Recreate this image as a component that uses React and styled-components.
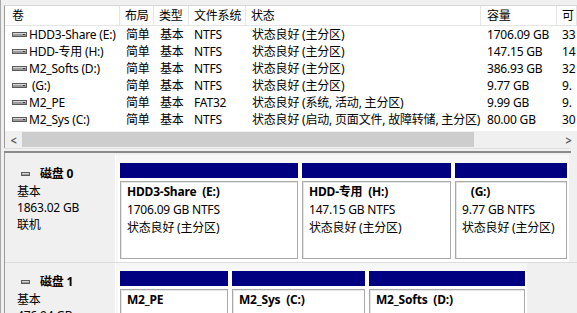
import React from 'react';
import styled, { createGlobalStyle } from 'styled-components';

const GlobalStyle = createGlobalStyle`
  html, body {
    margin: 0;
    padding: 0;
    background: #f0f0f0;
    overflow: hidden;
  }
  body {
    font-family: "Noto Sans", "Noto Sans CJK SC", sans-serif;
    font-size: 12px;
    letter-spacing: -0.2px;
    color: #000;
  }
`;

const COLS = '115px 34px 35px 57px 235px 76px 1fr';

const volumes = [
  { name: 'HDD3-Share (E:)', layout: '简单', type: '基本', fs: 'NTFS', status: '状态良好 (主分区)', size: '1706.09 GB', free: '33' },
  { name: 'HDD-专用 (H:)', layout: '简单', type: '基本', fs: 'NTFS', status: '状态良好 (主分区)', size: '147.15 GB', free: '14' },
  { name: 'M2_Softs (D:)', layout: '简单', type: '基本', fs: 'NTFS', status: '状态良好 (主分区)', size: '386.93 GB', free: '32' },
  { name: ' (G:)', layout: '简单', type: '基本', fs: 'NTFS', status: '状态良好 (主分区)', size: '9.77 GB', free: '9.' },
  { name: 'M2_PE', layout: '简单', type: '基本', fs: 'FAT32', status: '状态良好 (系统, 活动, 主分区)', size: '9.99 GB', free: '9.' },
  { name: 'M2_Sys (C:)', layout: '简单', type: '基本', fs: 'NTFS', status: '状态良好 (启动, 页面文件, 故障转储, 主分区)', size: '80.00 GB', free: '30' },
];

const disks = [
  {
    name: '磁盘 0',
    size: '1863.02 GB',
    parts: [
      { title: 'HDD3-Share  (E:)', size: '1706.09 GB NTFS', width: 182 },
      { title: 'HDD-专用  (H:)', size: '147.15 GB NTFS', width: 153 },
      { title: '   (G:)', size: '9.77 GB NTFS', width: 116 },
    ],
  },
  {
    name: '磁盘 1',
    size: '476.94 GB',
    parts: [
      { title: 'M2_PE', size: '10.00 GB FAT32', width: 112 },
      { title: 'M2_Sys  (C:)', size: '80.00 GB NTFS', width: 137 },
      { title: 'M2_Softs  (D:)', size: '386.93 GB NTFS', width: 160 },
    ],
  },
];

const Window = styled.div`
  width: 577px;
  height: 313px;
  overflow: hidden;
  display: flex;
  flex-direction: column;
  padding: 5px 0 0 3px;
  box-sizing: border-box;
  border-left: 1px solid #a8a8a8;
`;

const TopPane = styled.div`
  background: #fff;
  border-left: 1px solid #9a9a9a;
  border-top: 1px solid #d8d8d8;
  display: flex;
  flex-direction: column;
  flex-shrink: 0;
`;

const Grid = styled.div`
  display: grid;
  grid-template-columns: ${COLS};
`;

const HeadCell = styled.div`
  height: 19px;
  line-height: 19px;
  padding-left: ${p => p.$pad || 5}px;
  border-right: 1px solid #e5e5e5;
  border-bottom: 1px solid #e5e5e5;
  white-space: nowrap;
  overflow: hidden;
`;

const Cell = styled.div`
  height: 17px;
  line-height: 17px;
  padding-left: ${p => p.$pad || 6}px;
  white-space: pre;
  overflow: hidden;
  display: flex;
  align-items: center;
  gap: 2px;
`;

const Scrollbar = styled.div`
  margin-top: 3px;
  height: 17px;
  display: flex;
  align-items: center;
  background: #f0f0f0;
  color: #606060;
`;

const Arrow = styled.div`
  width: 17px;
  text-align: center;
  font-size: 11px;
  font-weight: bold;
  transform: scaleY(1.2);
`;

const Track = styled.div`
  flex: 1;
  height: 17px;
  display: flex;
  align-items: center;
`;

const Thumb = styled.div`
  width: 452px;
  height: 15px;
  background: #cdcdcd;
`;

const Splitter = styled.div`
  height: 5px;
  flex-shrink: 0;
  border-top: 1px solid #e0e0e0;
  border-bottom: 2px solid #8a8a8a;
  margin-right: 6px;
  box-sizing: border-box;
`;

const BottomPane = styled.div`
  border-left: 1px solid #9a9a9a;
  display: flex;
  flex-direction: column;
  padding-top: 2px;
`;

const DiskRow = styled.div`
  display: flex;
  flex-shrink: 0;
  border-bottom: 1px solid #dcdcdc;
`;

const DiskLabel = styled.div`
  width: 111px;
  flex-shrink: 0;
  background: #f0f0f0;
  border-right: 1px solid #fff;
  padding: 11px 0 0 12px;
  box-sizing: border-box;
  line-height: 16.5px;
`;

const DiskName = styled.div`
  display: flex;
  align-items: center;
  gap: 10px;
  padding-left: 4px;
  font-weight: bold;
  margin-bottom: 1px;
`;

const PartArea = styled.div`
  display: flex;
  padding: 8px 0 0 2px;
  background: #f7f7f7;
`;

const Partition = styled.div`
  width: ${p => p.$w}px;
  box-sizing: border-box;
  padding: 0 2px 3px;
  background: #fff;
  display: flex;
  flex-direction: column;
`;

const Bar = styled.div`
  height: 15px;
  background: #000080;
`;

const PartBody = styled.div`
  margin-top: 3px;
  height: 78px;
  box-sizing: border-box;
  border: 1px solid #a9a9a9;
  box-shadow: inset 1px 1px 0 #e6e6e6;
  padding: 1px 0 0 6px;
  line-height: 18px;
  white-space: pre;
  overflow: hidden;
`;

const PartTitle = styled.div`
  font-weight: bold;
`;

const DriveIcon = () => (
  <svg width="15" height="7" viewBox="0 0 15 7">
    <rect x="0.5" y="1.5" width="14" height="4" fill="#9c9c9c" stroke="#5a5a5a" />
    <rect x="1" y="2" width="13" height="1" fill="#d6d6d6" />
    <rect x="11" y="3" width="2" height="1" fill="#3a3a3a" />
  </svg>
);

const DiskIcon = () => (
  <svg width="9" height="6" viewBox="0 0 9 6">
    <rect x="0.5" y="1.5" width="8" height="3" fill="#9c9c9c" stroke="#5a5a5a" />
    <rect x="1" y="2" width="7" height="1" fill="#d6d6d6" />
  </svg>
);

const App = () => (
  <>
    <GlobalStyle />
    <Window>
      <TopPane>
        <Grid>
          <HeadCell $pad={7}>卷</HeadCell>
          <HeadCell>布局</HeadCell>
          <HeadCell>类型</HeadCell>
          <HeadCell>文件系统</HeadCell>
          <HeadCell>状态</HeadCell>
          <HeadCell $pad={6}>容量</HeadCell>
          <HeadCell>可</HeadCell>
          {volumes.map(v => (
            <React.Fragment key={v.name}>
              <Cell $pad={7}>
                <DriveIcon />
                {v.name}
              </Cell>
              <Cell>{v.layout}</Cell>
              <Cell $pad={6}>{v.type}</Cell>
              <Cell $pad={5}>{v.fs}</Cell>
              <Cell>{v.status}</Cell>
              <Cell>{v.size}</Cell>
              <Cell $pad={5}>{v.free}</Cell>
            </React.Fragment>
          ))}
        </Grid>
        <Scrollbar>
          <Arrow>&lt;</Arrow>
          <Track>
            <Thumb />
          </Track>
          <Arrow>&gt;</Arrow>
        </Scrollbar>
      </TopPane>
      <Splitter />
      <BottomPane>
        {disks.map(d => (
          <DiskRow key={d.name}>
            <DiskLabel>
              <DiskName>
                <DiskIcon />
                {d.name}
              </DiskName>
              <div>基本</div>
              <div>{d.size}</div>
              <div>联机</div>
            </DiskLabel>
            <PartArea>
              {d.parts.map(p => (
                <Partition key={p.title} $w={p.width}>
                  <Bar />
                  <PartBody>
                    <PartTitle>{p.title}</PartTitle>
                    <div>{p.size}</div>
                    <div>状态良好 (主分区)</div>
                  </PartBody>
                </Partition>
              ))}
            </PartArea>
          </DiskRow>
        ))}
      </BottomPane>
    </Window>
  </>
);

export default App;
